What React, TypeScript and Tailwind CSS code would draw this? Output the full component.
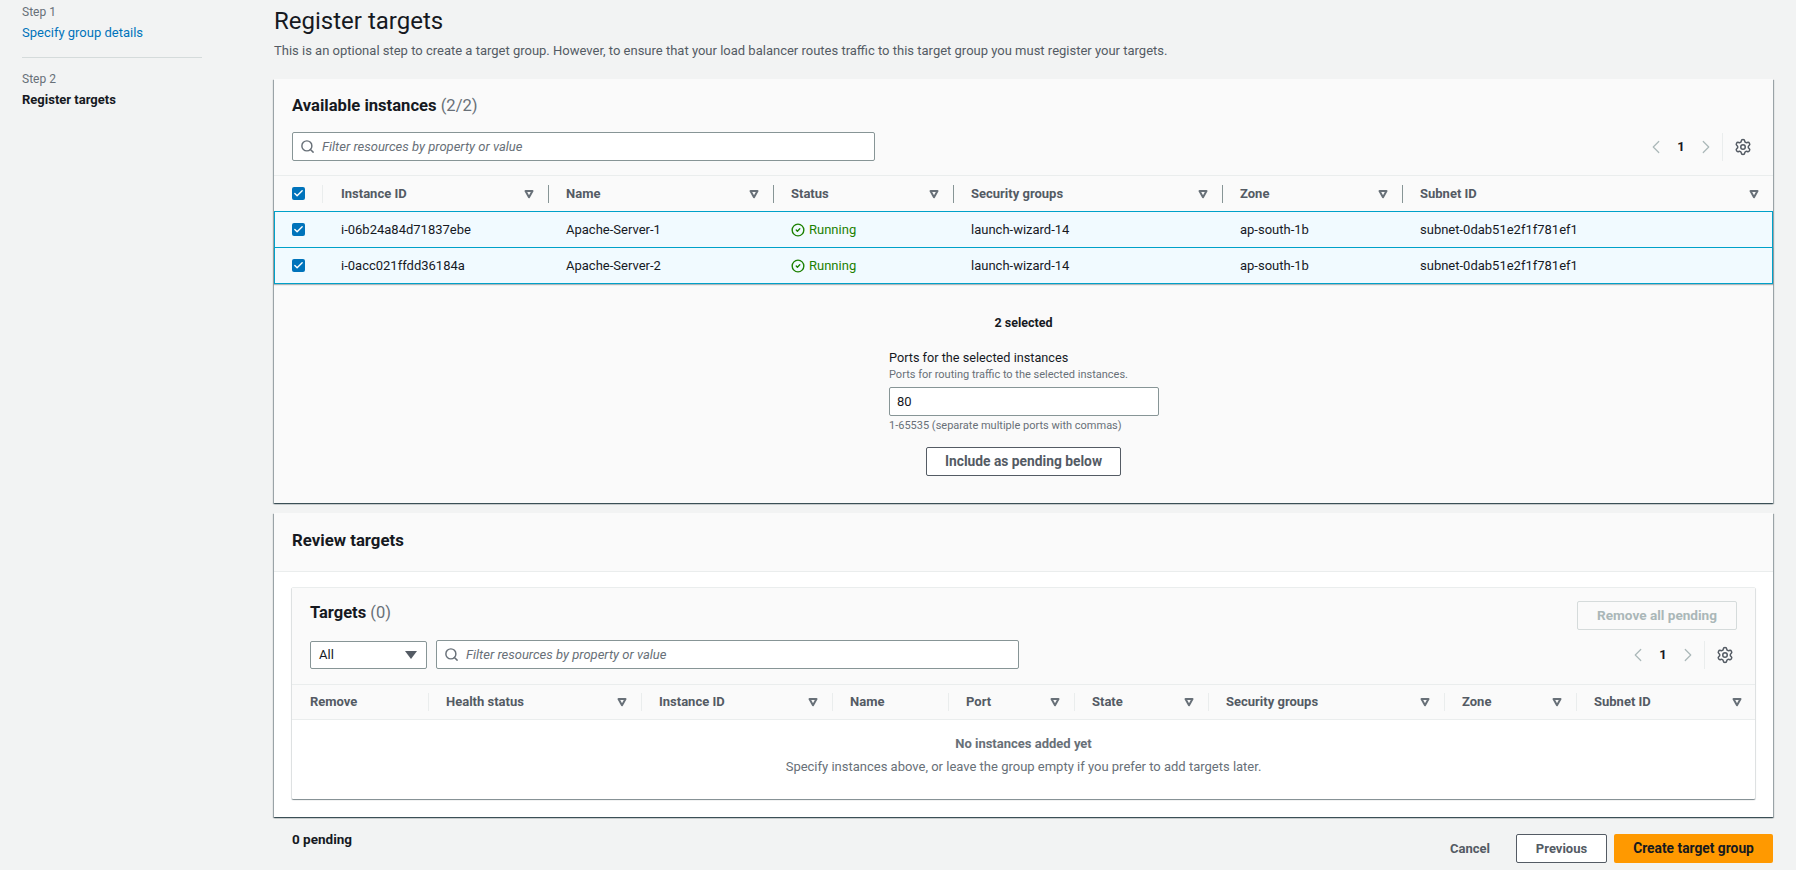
import React from "react";
import { Search, Settings, ChevronLeft, ChevronRight, Check, CircleCheck } from "lucide-react";

const font = "font-['Roboto',sans-serif]";

const SortCaret = () => (
  <svg width="10" height="10" viewBox="0 0 10 10" className="shrink-0 text-[#687078]">
    <path d="M1.5 2h7L5 8.2z" fill="none" stroke="currentColor" strokeWidth="2" strokeLinejoin="round" />
  </svg>
);

const Checkbox = () => (
  <span className="flex h-[13px] w-[13px] items-center justify-center rounded-[2px] bg-[#0073bb]">
    <Check size={11} strokeWidth={3} className="text-white" />
  </span>
);

const Pager = () => (
  <div className="flex items-center">
    <ChevronLeft size={22} strokeWidth={1.3} className="text-[#aab7b8]" />
    <span className="mx-[9px] w-[10px] text-center text-[13px] font-bold text-[#16191f]">1</span>
    <ChevronRight size={22} strokeWidth={1.3} className="text-[#aab7b8]" />
    <div className="ml-[5px] flex h-[28px] items-center border-l border-[#eaeded] pl-[11px]">
      <Settings size={18} strokeWidth={2} className="text-[#545b64]" />
    </div>
  </div>
);

const FilterInput = ({ width }: { width: string }) => (
  <div className={`flex h-[29px] items-center rounded-[2px] border border-[#879596] bg-white pl-[7px] ${width}`}>
    <Search size={15} strokeWidth={2.3} className="text-[#687078]" />
    <span className="ml-[7px] text-[13px] italic text-[#687078]">Filter resources by property or value</span>
  </div>
);

const HeadCell = ({ label, caret = true, dark, first }: { label: React.ReactNode; caret?: boolean; dark?: boolean; first?: boolean }) => (
  <div
    className={`flex h-[18px] items-center justify-between pr-[14px] text-[13px] font-bold text-[#545b64] ${
      first ? "pl-[18px]" : `border-l pl-[17px] ${dark ? "border-[#879596]" : "border-[#eaeded]"}`
    }`}
  >
    <span>{label}</span>
    {caret && <SortCaret />}
  </div>
);

const instances = [
  { id: "i-06b24a84d71837ebe", name: "Apache-Server-1" },
  { id: "i-0acc021ffdd36184a", name: "Apache-Server-2" },
];

const panelShadow = "shadow-[0_1px_1px_0_rgba(0,28,36,0.5),1px_1px_1px_0_rgba(0,28,36,0.3),-1px_1px_1px_0_rgba(0,28,36,0.3)]";

const Sidebar = () => (
  <aside className="w-[274px] shrink-0 pl-[22px] pt-[4px]">
    <div className="text-[12px] leading-[16px] text-[#687078]">Step 1</div>
    <div className="mt-[2px] text-[13px] leading-[22px] text-[#0073bb]">Specify group details</div>
    <div className="mt-[13px] h-px w-[180px] bg-[#d5dbdb]" />
    <div className="mt-[13px] text-[12px] leading-[16px] text-[#687078]">Step 2</div>
    <div className="mt-[2px] text-[13px] font-bold leading-[22px] text-[#16191f]">Register targets</div>
  </aside>
);

const AvailableInstances = () => (
  <section className={`h-[424px] bg-[#fafafa] ${panelShadow}`}>
    <div className="flex items-end justify-between pl-[18px] pr-[21px] pt-[15px]">
      <div>
        <h2 className="text-[16.6px] font-bold leading-[24px] text-[#16191f]">
          Available instances <span className="font-normal text-[#687078]">(2/2)</span>
        </h2>
        <div className="mt-[14px]">
          <FilterInput width="w-[583px]" />
        </div>
      </div>
      <Pager />
    </div>

    <div className="mt-[14px] grid h-[36px] grid-cols-[49px_225px_225px_180px_269px_180px_371px] items-center border-t border-[#eaeded]">
      <div className="flex h-[18px] items-center border-r border-[#eaeded] pl-[18px]">
        <Checkbox />
      </div>
      <HeadCell label="Instance ID" first />
      <HeadCell label="Name" dark />
      <HeadCell label="Status" dark />
      <HeadCell label="Security groups" dark />
      <HeadCell label="Zone" dark />
      <HeadCell label="Subnet ID" dark />
    </div>

    {instances.map((row, i) => (
      <div
        key={row.id}
        className={`grid h-[37px] grid-cols-[49px_225px_225px_180px_269px_180px_371px] items-center border border-[#00a1c9] bg-[#f1faff] text-[13px] text-[#16191f] ${
          i > 0 ? "-mt-px shadow-[0_1px_1px_0_rgba(0,28,36,0.3)]" : ""
        }`}
      >
        <div className="pl-[17px]">
          <Checkbox />
        </div>
        <div className="pl-[17px]">{row.id}</div>
        <div className="pl-[17px]">{row.name}</div>
        <div className="flex items-center gap-[4px] pl-[17px] text-[#1d8102]">
          <CircleCheck size={14} strokeWidth={2.4} />
          Running
        </div>
        <div className="pl-[17px]">launch-wizard-14</div>
        <div className="pl-[17px]">ap-south-1b</div>
        <div className="pl-[17px]">subnet-0dab51e2f1f781ef1</div>
      </div>
    ))}

    <div className="mt-[30px] text-center text-[12.5px] font-bold leading-[18px] text-[#16191f]">2 selected</div>
    <div className="ml-[615px] mt-[17px] w-[270px]">
      <div className="text-[12.7px] leading-[18px] text-[#16191f]">Ports for the selected instances</div>
      <div className="text-[11px] leading-[16px] text-[#687078]">Ports for routing traffic to the selected instances.</div>
      <div className="mt-[4px] flex h-[29px] items-center rounded-[2px] border border-[#879596] bg-white pl-[7px] text-[13px] text-[#16191f]">80</div>
      <div className="mt-[2px] text-[11px] leading-[16px] text-[#687078]">1-65535 (separate multiple ports with commas)</div>
    </div>
    <div className="mt-[13px] flex justify-center">
      <button className="h-[29px] w-[195px] rounded-[2px] border border-[#545b64] bg-white text-[13.8px] font-bold text-[#545b64]">
        Include as pending below
      </button>
    </div>
  </section>
);

const ReviewTargets = () => (
  <section className={`mt-[10px] bg-white ${panelShadow}`}>
    <div className="flex h-[59px] items-center border-b border-[#eaeded] bg-[#fafafa] pb-[3px] pl-[18px]">
      <h2 className="text-[16.8px] font-bold text-[#16191f]">Review targets</h2>
    </div>
    <div className="px-[18px] pb-[18px] pt-[15px]">
      <div className="h-[212px] rounded-[1px] border-t border-[#eaeded] bg-white shadow-[0_1px_1px_0_rgba(0,28,36,0.4),1px_1px_1px_0_rgba(0,28,36,0.1),-1px_1px_1px_0_rgba(0,28,36,0.1)]">
        <div className="bg-[#fafafa] pl-[18px] pr-[18px] pt-[13px]">
          <div className="flex items-start justify-between">
            <h3 className="mt-[1px] text-[16.5px] font-bold leading-[22px] text-[#16191f]">
              Targets <span className="font-normal text-[#687078]">(0)</span>
            </h3>
            <button className="h-[29px] w-[160px] rounded-[2px] border border-[#d5dbdb] text-[13.6px] font-bold text-[#aab7b8]">
              Remove all pending
            </button>
          </div>
          <div className="mt-[10px] flex items-center justify-between pb-[15px]">
            <div className="flex items-center gap-[9px]">
              <div className="flex h-[28px] w-[117px] items-center justify-between rounded-[2px] border border-[#879596] bg-white pl-[8px] pr-[9px] text-[13px] text-[#16191f]">
                All
                <span className="h-0 w-0 border-x-[6px] border-t-[8px] border-x-transparent border-t-[#545b64]" />
              </div>
              <FilterInput width="w-[583px]" />
            </div>
            <div className="pr-[3px]">
              <Pager />
            </div>
          </div>
        </div>
        <div className="grid h-[36px] grid-cols-[136px_213px_191px_116px_126px_134px_236px_132px_180px] items-center border-y border-[#eaeded] bg-[#fafafa]">
          <HeadCell label="Remove" caret={false} first />
          <HeadCell label="Health status" />
          <HeadCell label="Instance ID" />
          <HeadCell label="Name" caret={false} />
          <HeadCell label="Port" />
          <HeadCell label="State" />
          <HeadCell label="Security groups" />
          <HeadCell label="Zone" />
          <HeadCell label="Subnet ID" />
        </div>
        <div className="pt-[14px] text-center">
          <div className="text-[13px] font-bold leading-[20px] text-[#687078]">No instances added yet</div>
          <div className="mt-[3px] text-[13px] leading-[20px] text-[#687078]">
            Specify instances above, or leave the group empty if you prefer to add targets later.
          </div>
        </div>
      </div>
    </div>
  </section>
);

export default function App() {
  return (
    <div className={`flex h-[870px] overflow-hidden bg-[#f2f3f3] ${font}`}>
      <Sidebar />
      <main className="w-[1499px] shrink-0">
        <h1 className="pt-[2px] text-[24px] leading-[38px] text-[#16191f]">Register targets</h1>
        <p className="mt-[1px] text-[13px] leading-[20px] text-[#545b64]">
          This is an optional step to create a target group. However, to ensure that your load balancer routes traffic to this target group you must register your targets.
        </p>
        <div className="mt-[18px]">
          <AvailableInstances />
        </div>
        <ReviewTargets />
        <div className="mt-[8px] flex items-start justify-between">
          <div className="pl-[18px] pt-[4px] text-[13.5px] font-bold text-[#16191f]">0 pending</div>
          <div className="mt-[9px] flex items-center">
            <span className="mr-[26px] text-[13px] font-bold text-[#545b64]">Cancel</span>
            <button className="h-[29px] w-[91px] rounded-[2px] border border-[#545b64] bg-white text-[13px] font-bold text-[#545b64]">Previous</button>
            <button className="ml-[7px] h-[29px] w-[159px] rounded-[2px] bg-[#ff9900] text-[13.8px] font-bold text-[#16191f]">Create target group</button>
          </div>
        </div>
      </main>
    </div>
  );
}
